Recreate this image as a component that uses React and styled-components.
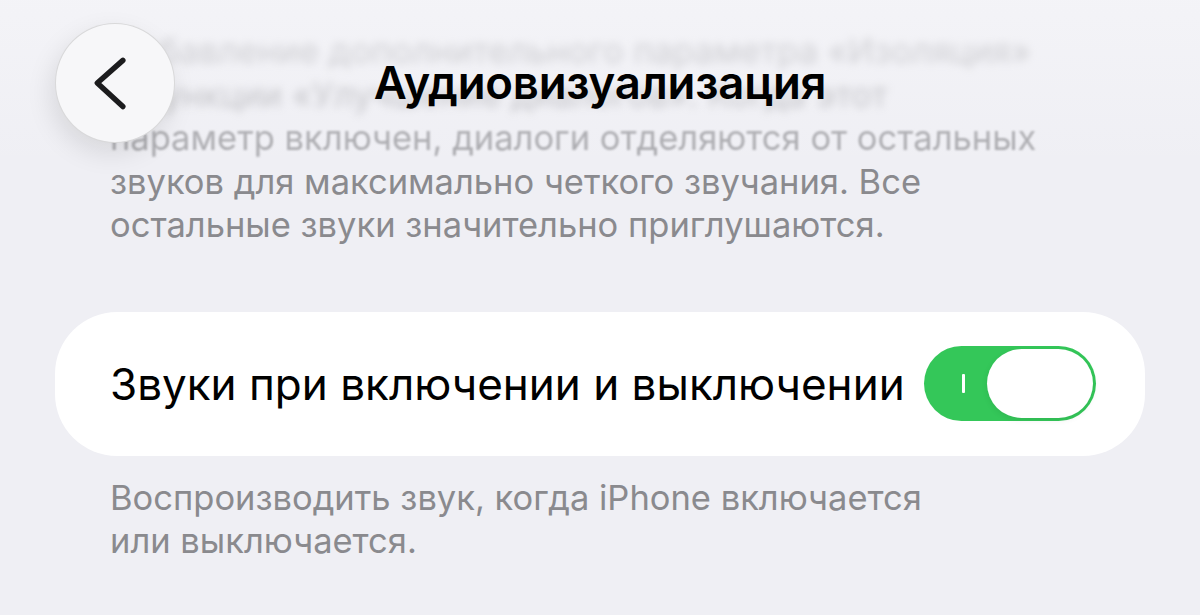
import React, { useState } from 'react';
import styled, { createGlobalStyle } from 'styled-components';

const GlobalStyle = createGlobalStyle`
    * {
        box-sizing: border-box;
    }
    body {
        margin: 0;
        background: #efeff4;
        font-family: Inter, "Noto Sans", sans-serif;
        -webkit-font-smoothing: antialiased;
    }
`;

const Screen = styled.div`
    position: relative;
    width: 1200px;
    height: 615px;
    overflow: hidden;
    padding: 0 55px;
    display: flex;
    flex-direction: column;
`;

const NavBar = styled.div`
    position: absolute;
    top: 0;
    left: 0;
    right: 0;
    height: 165px;
    padding: 23px 55px 0 55px;
    display: flex;
    align-items: flex-start;
    background: linear-gradient(rgba(247, 247, 250, 0.55), rgba(247, 247, 250, 0));
`;

const BackButton = styled.button`
    width: 120px;
    height: 120px;
    flex-shrink: 0;
    border-radius: 50%;
    border: 1px solid rgba(0, 0, 0, 0.12);
    background: #f7f7f9;
    box-shadow: -4px 10px 26px rgba(0, 0, 0, 0.1);
    padding: 0;
    display: flex;
    align-items: center;
    justify-content: center;
    cursor: pointer;
`;

const NavTitle = styled.h1`
    position: absolute;
    left: 0;
    right: 0;
    top: 55px;
    margin: 0;
    text-align: center;
    font-size: 45.5px;
    line-height: 56px;
    font-weight: 600;
    letter-spacing: -0.2px;
    color: #000;
    pointer-events: none;
`;

const Description = styled.p`
    margin: 29px 0 0 0;
    padding: 0 55px;
    font-size: 34.5px;
    line-height: 43.5px;
    color: #8a8a8e;
`;

// lines that slide under the nav bar get softer the higher they are
const Line = styled.span`
    display: block;
    white-space: nowrap;
    filter: ${p => (p.$blur ? `blur(${p.$blur}px)` : 'none')};
    opacity: ${p => (p.$blur > 2 ? 0.55 : p.$blur ? 0.7 : 1)};
`;

const Card = styled.div`
    margin-top: 65px;
    height: 144px;
    border-radius: 62px;
    background: #fff;
    padding: 0 49px 0 55px;
    display: flex;
    align-items: center;
    justify-content: space-between;
`;

const RowLabel = styled.span`
    font-size: 44px;
    color: #000;
`;

const Track = styled.button`
    width: 172px;
    height: 75px;
    border-radius: 38px;
    border: none;
    padding: 3px;
    background: ${p => (p.$on ? '#34c759' : '#e9e9ea')};
    display: flex;
    align-items: center;
    justify-content: ${p => (p.$on ? 'flex-end' : 'flex-start')};
    position: relative;
    cursor: pointer;
`;

const OnMark = styled.span`
    position: absolute;
    left: 38px;
    top: 28px;
    width: 2.5px;
    height: 19px;
    background: #fff;
    border-radius: 1px;
`;

const Knob = styled.span`
    width: 106px;
    height: 69px;
    border-radius: 35px;
    background: #fff;
    box-shadow: 0 2px 6px rgba(0, 0, 0, 0.08);
`;

const Footnote = styled.p`
    margin: 20px 0 0 0;
    padding: 0 55px;
    font-size: 34.5px;
    line-height: 43.5px;
    color: #8a8a8e;
`;

const Chevron = () => (
    <svg width="120" height="120" viewBox="0 0 120 120">
        <path
            d="M68 37 L42 60 L68 84"
            fill="none"
            stroke="#1c1c1e"
            strokeWidth="5.5"
            strokeLinecap="round"
            strokeLinejoin="round"
        />
    </svg>
);

const App = () => {
    const [on, setOn] = useState(true);

    return (
        <>
            <GlobalStyle />
            <Screen>
                <Description>
                    <Line $blur={4.5}>Добавление дополнительного параметра «Изоляция»</Line>
                    <Line $blur={4}>в функции «Улучшение диалогов». Когда этот</Line>
                    <Line $blur={1}>параметр включен, диалоги отделяются от остальных</Line>
                    <Line>звуков для максимально четкого звучания. Все</Line>
                    <Line>остальные звуки значительно приглушаются.</Line>
                </Description>

                <Card>
                    <RowLabel>Звуки при включении и выключении</RowLabel>
                    <Track $on={on} onClick={() => setOn(v => !v)}>
                        {on && <OnMark />}
                        <Knob />
                    </Track>
                </Card>

                <Footnote>
                    Воспроизводить звук, когда iPhone включается
                    <br />
                    или выключается.
                </Footnote>

                <NavBar>
                    <BackButton aria-label="Назад">
                        <Chevron />
                    </BackButton>
                    <NavTitle>Аудиовизуализация</NavTitle>
                </NavBar>
            </Screen>
        </>
    );
};

export default App;
